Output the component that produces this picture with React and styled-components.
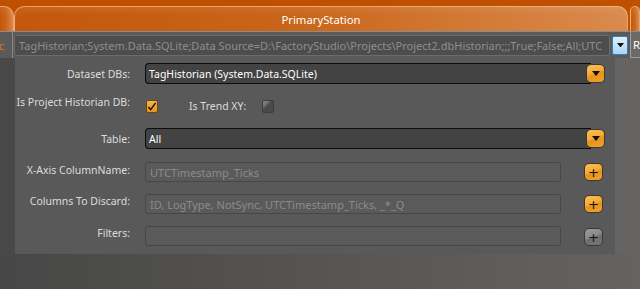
import React from "react";
import styled, { createGlobalStyle } from "styled-components";

const Global = createGlobalStyle`
  html, body { margin: 0; padding: 0; }
  body {
    width: 640px;
    height: 289px;
    overflow: hidden;
    font-family: "Noto Sans", "Open Sans", sans-serif;
    background: #555;
  }
`;

const Page = styled.div`
  width: 640px;
  height: 289px;
  display: flex;
  flex-direction: column;
`;

const Header = styled.div`
  height: 31px;
  background: #bf5002;
  display: flex;
  align-items: flex-end;
`;

const Tab = styled.div`
  height: 25px;
  box-sizing: border-box;
  border: 1px solid rgba(250, 185, 135, 0.75);
  border-bottom: none;
  border-radius: 10px 10px 0 0;
  background: linear-gradient(to right, #c4570c, #c96518 45%, #da8a4e);
  color: #fff;
  font-size: 11.3px;
  display: flex;
  align-items: center;
  justify-content: center;
  width: ${(p) => p.$w || "auto"};
  flex: ${(p) => (p.$grow ? 1 : "none")};
  margin-left: ${(p) => p.$ml || "0px"};
  border-left: ${(p) => (p.$noLeft ? "none" : "")};
  border-top-left-radius: ${(p) => (p.$noLeft ? "0" : "10px")};
  box-shadow: inset 0 8px 8px -6px rgba(255, 255, 255, 0.12);
`;

const ConnRow = styled.div`
  height: 27px;
  box-sizing: border-box;
  border-top: 1px solid #8c8c8c;
  background: #5a5a5a;
  display: flex;
  align-items: center;
`;

const StubCell = styled.div`
  width: 13px;
  height: 100%;
  border-right: 1px solid #8a8a8a;
  box-sizing: border-box;
  color: #e8731e;
  font-size: 11px;
  overflow: hidden;
  display: flex;
  align-items: center;
  justify-content: flex-end;
  padding-right: 8px;
`;

const ConnBox = styled.div`
  margin-left: 1px;
  width: 596px;
  height: 21px;
  box-sizing: border-box;
  border: 1px solid #6c6c6c;
  border-radius: 2px;
  background: #4d4d4d;
  color: #8d8d8d;
  font-size: 11px;
  white-space: nowrap;
  overflow: hidden;
  display: flex;
  align-items: center;
  padding-left: 4px;
`;

const BlueDrop = styled.div`
  margin-left: 2px;
  width: 16px;
  height: 19px;
  box-sizing: border-box;
  border: 1px solid #3b7db6;
  border-radius: 2px;
  background: linear-gradient(#dff0fc, #a9d5f3);
  display: flex;
  align-items: center;
  justify-content: center;
`;

const RightCell = styled.div`
  margin-left: 2px;
  flex: 1;
  height: 100%;
  box-sizing: border-box;
  border-left: 1px solid #a0a0a0;
  border-bottom: 1px solid #9a9a9a;
  background: #6b6a69;
  color: #fff;
  font-size: 11.3px;
  display: flex;
  align-items: center;
  padding-left: 2px;
  overflow: hidden;
  white-space: nowrap;
`;

const Body = styled.div`
  flex: 1;
  display: flex;
  align-items: flex-start;
  background: linear-gradient(to right, #474747, #53524f 40%, #656361);
`;

const LeftStrip = styled.div`
  width: 15px;
  height: 196px;
  background: #484848;
`;

const Panel = styled.div`
  width: 600px;
  height: 196px;
  box-sizing: border-box;
  padding-top: 5px;
  background: #595959;
  display: flex;
  flex-direction: column;
`;

const RightStrip = styled.div`
  flex: 1;
  height: 196px;
  background: #666462;
`;

const Row = styled.div`
  display: flex;
  align-items: ${(p) => (p.$top ? "flex-start" : "center")};
  margin-top: ${(p) => p.$mt || 0}px;
  height: ${(p) => p.$h}px;
`;

const Label = styled.div`
  width: 115px;
  flex: none;
  text-align: right;
  color: #dcdcdc;
  font-size: 10.5px;
  line-height: ${(p) => p.$lh || "normal"};
  white-space: nowrap;
  padding-top: ${(p) => p.$pt || 0}px;
  margin-right: ${(p) => p.$mr ?? 15}px;
`;

const InlineLabel = styled.div`
  color: #dcdcdc;
  font-size: 10.5px;
  line-height: 11px;
  white-space: nowrap;
  margin-left: ${(p) => p.$ml}px;
  margin-top: 4px;
`;

const Combo = styled.div`
  display: flex;
  align-items: center;
  height: 100%;
`;

const ComboBox = styled.div`
  width: 446px;
  height: 100%;
  box-sizing: border-box;
  border: 1px solid #0c0c0c;
  border-right: none;
  border-radius: 4px 0 0 4px;
  background: #434343;
  color: #fff;
  font-size: 10.5px;
  display: flex;
  align-items: center;
  padding-left: 3px;
`;

const OrangeBtn = styled.div`
  width: 19px;
  height: ${(p) => p.$h || 19}px;
  box-sizing: border-box;
  border: 1px solid #3a3a3a;
  border-radius: 5px;
  margin-left: ${(p) => p.$ml || 0}px;
  margin-top: ${(p) => p.$mtop || 0}px;
  background: ${(p) =>
    p.$gray
      ? "linear-gradient(160deg, #9a9a9a 0%, #8a8a8a 45%, #6e6e6e 55%, #767676 100%)"
      : "linear-gradient(160deg, #fbc158 0%, #f4ab33 45%, #e8921c 55%, #f0a22a 100%)"};
  display: flex;
  align-items: center;
  justify-content: center;
  flex: none;
  color: #111;
  font-size: 13px;
  line-height: 1;
  font-family: "DejaVu Sans", sans-serif;
`;

const TextBox = styled.div`
  width: 416px;
  height: 100%;
  box-sizing: border-box;
  border: 1px solid #474747;
  border-radius: 3px;
  background: #5a5a5a;
  color: #8b8b8b;
  font-size: 11px;
  display: flex;
  align-items: center;
  padding-left: 4px;
  white-space: nowrap;
  overflow: hidden;
`;

const Check = styled.div`
  width: 12px;
  height: 13px;
  box-sizing: border-box;
  border-radius: 2px;
  flex: none;
  margin-left: ${(p) => p.$ml || 0}px;
  margin-top: 3px;
  border: 1px solid ${(p) => (p.$on ? "#6a4a10" : "#3c3c3c")};
  background: ${(p) =>
    p.$on
      ? "linear-gradient(#f8b648, #e8901a)"
      : "linear-gradient(135deg, #8a8a8a 0%, #6a6a6a 35%, #4c4c4c 40%, #484848 100%)"};
  display: flex;
  align-items: center;
  justify-content: center;
`;

const Arrow = ({ color = "#111", w = 8 }) => (
  <svg width={w} height={w / 2 + 1} viewBox="0 0 8 5">
    <path d="M0 0 H8 L4 5 Z" fill={color} />
  </svg>
);

const Tick = () => (
  <svg width="11" height="11" viewBox="0 0 11 11">
    <path d="M1.5 6 L4 9 L9.5 1.5" stroke="#111" strokeWidth="1.6" fill="none" />
  </svg>
);

export default function App() {
  return (
    <Page>
      <Global />
      <Header>
        <Tab $w="14px" $noLeft />
        <Tab $grow>PrimaryStation</Tab>
        <Tab $w="10px" $ml="2px" />
      </Header>
      <ConnRow>
        <StubCell>c</StubCell>
        <ConnBox>
          TagHistorian;System.Data.SQLite;Data Source=D:\FactoryStudio\Projects\Project2.dbHistorian;;;True;False;All;UTC
        </ConnBox>
        <BlueDrop>
          <Arrow w={7} />
        </BlueDrop>
        <RightCell>Re</RightCell>
      </ConnRow>
      <Body>
        <LeftStrip />
        <Panel>
          <Row $h={21}>
            <Label>Dataset DBs:</Label>
            <Combo>
              <ComboBox>TagHistorian (System.Data.SQLite)</ComboBox>
              <OrangeBtn $ml={-5}>
                <Arrow w={8} />
              </OrangeBtn>
            </Combo>
          </Row>
          <Row $h={17} $mt={13} $top>
            <Label $lh="11px">Is Project Historian DB:</Label>
            <Check $on $ml={1}>
              <Tick />
            </Check>
            <InlineLabel $ml={31}>Is Trend XY:</InlineLabel>
            <Check $ml={16} />
          </Row>
          <Row $h={21} $mt={14}>
            <Label>Table:</Label>
            <Combo>
              <ComboBox>All</ComboBox>
              <OrangeBtn $ml={-5}>
                <Arrow w={8} />
              </OrangeBtn>
            </Combo>
          </Row>
          <Row $h={20} $mt={13} $top>
            <Label $pt={1}>X-Axis ColumnName:</Label>
            <TextBox>UTCTimestamp_Ticks</TextBox>
            <OrangeBtn $ml={23} $h={18} $mtop={1}>+</OrangeBtn>
          </Row>
          <Row $h={20} $mt={12} $top>
            <Label $pt={0}>Columns To Discard:</Label>
            <TextBox>ID, LogType, NotSync, UTCTimestamp_Ticks, _*_Q</TextBox>
            <OrangeBtn $ml={23} $h={18} $mtop={1}>+</OrangeBtn>
          </Row>
          <Row $h={20} $mt={12} $top>
            <Label $pt={0}>Filters:</Label>
            <TextBox />
            <OrangeBtn $ml={23} $h={18} $mtop={2} $gray>+</OrangeBtn>
          </Row>
        </Panel>
        <RightStrip />
      </Body>
    </Page>
  );
}
